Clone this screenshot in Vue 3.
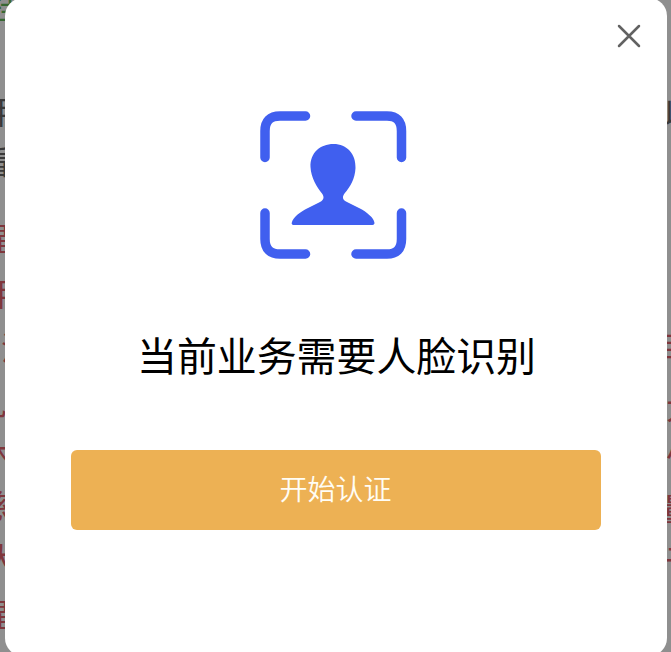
<template>
  <div class="auth-page">
    <!-- 遮罩下方的页面内容 -->
    <div class="page-content">
      <div class="page-col">
        <span
          v-for="(item, index) in leftTexts"
          :key="index"
          class="page-text"
          :class="item.color"
          :style="{ marginTop: `${item.gap}px`, textIndent: `${item.indent}px` }"
        >{{ item.text }}</span>
      </div>
      <div class="page-col">
        <span
          v-for="(item, index) in rightTexts"
          :key="index"
          class="page-text"
          :class="item.color"
          :style="{ marginTop: `${item.gap}px`, textIndent: `${item.indent}px` }"
        >{{ item.text }}</span>
      </div>
    </div>

    <div v-if="visible" class="auth-mask">
      <div class="auth-dialog">
        <div class="auth-header">
          <button class="auth-close" aria-label="关闭" @click="handleClose">
            <svg width="24" height="24" viewBox="0 0 24 24">
              <path d="M2 2 L22 22 M22 2 L2 22" />
            </svg>
          </button>
        </div>

        <svg class="auth-face" width="150" height="152" viewBox="0 0 150 152">
          <g class="face-frame">
            <path d="M7 48.500 V22 Q7 7 22 7 H47.500" />
            <path d="M98 7 H129 Q143.500 7 143.500 22 V48.500" />
            <path d="M7 104 V130 Q7 145 22 145 H47.500" />
            <path d="M98 145 H129 Q143.500 145 143.500 130 V104" />
          </g>
          <path
            class="face-person"
            d="M75.500 35 C89 35 98 45 97.500 59 C97 70 92 78 86.500 84.500
               C84 88 84.500 90.500 88 92.500 L101 99 C109 103 116 109 116.500 114
               C116.500 115.300 115.500 116 114.500 116 H35.500
               C34.300 116 33.500 115.200 33.700 114 C35 108 42 103 50 99
               L62 93 C66 91 66.500 88 64 84.500 C59 78 53 69 52.500 58
               C52 44 62 35 75.500 35 Z"
          />
        </svg>

        <div class="auth-title">当前业务需要人脸识别</div>
        <button class="auth-btn" @click="handleStart">开始认证</button>
      </div>
    </div>
  </div>
</template>

<script setup>
import { ref } from 'vue';

const emit = defineEmits(['start', 'close']);

const visible = ref(true);

const leftTexts = [
  { text: '挂', color: 'green', gap: -11, indent: -11 },
  { text: '用', color: 'dark', gap: 73, indent: -15 },
  { text: '看', color: 'dark', gap: 18, indent: -21 },
  { text: '醒', color: 'red', gap: 45, indent: -23 },
  { text: '用', color: 'red', gap: 23, indent: -15 },
  { text: '注', color: 'red', gap: 22, indent: 1 },
  { text: '九', color: 'red', gap: 23, indent: -26 },
  { text: '木', color: 'red', gap: 19, indent: -18 },
  { text: '慈', color: 'red', gap: 20, indent: -22 },
  { text: '大', color: 'red', gap: 21, indent: -15 },
  { text: '醒', color: 'red', gap: 24, indent: -23 }
];

const rightTexts = [
  { text: '以', color: 'dark', gap: 95, indent: -4 },
  { text: '自', color: 'red', gap: 200, indent: -8 },
  { text: '大', color: 'red', gap: 30, indent: -1 },
  { text: '小', color: 'red', gap: 12, indent: -1 },
  { text: '量', color: 'red', gap: 26, indent: -5 },
  { text: '于', color: 'red', gap: 20, indent: -2 }
];

const handleStart = () => {
  emit('start');
};

const handleClose = () => {
  visible.value = false;
  emit('close');
};
</script>

<style>
body {
  margin: 0;
  overflow: hidden;
}
</style>

<style scoped>
.auth-page {
  position: relative;
  height: 652px;
  overflow: hidden;
  background: #fff;
  font-family: "Noto Sans CJK SC", sans-serif;
}

.page-content {
  display: flex;
  justify-content: space-between;
  height: 652px;
}

.page-col {
  display: flex;
  flex-direction: column;
  flex: none;
  width: 5px;
}

.page-col:last-child {
  width: 4px;
}

.page-text {
  flex: none;
  height: 32px;
  line-height: 32px;
  font-size: 32px;
  white-space: nowrap;
}

.green {
  color: #62b95c;
}

.dark {
  color: #666;
}

.red {
  color: #e2606c;
}

/* 半透明遮罩 */
.auth-mask {
  position: absolute;
  top: 0;
  right: 0;
  bottom: 0;
  left: 0;
  display: flex;
  justify-content: center;
  background: rgba(0, 0, 0, 0.44);
}

.auth-dialog {
  box-sizing: border-box;
  display: flex;
  flex: none;
  flex-direction: column;
  align-items: center;
  width: 662px;
  height: 658px;
  margin-top: -2px;
  border-radius: 18px;
  background: #fff;
}

.auth-header {
  display: flex;
  justify-content: flex-end;
  box-sizing: border-box;
  width: 100%;
  height: 111px;
  padding: 26px 25.5px 0 0;
}

.auth-close {
  width: 24px;
  height: 24px;
  padding: 0;
  border: none;
  background: none;
  cursor: pointer;
}

.auth-close svg {
  display: block;
  fill: none;
  stroke: #626262;
  stroke-width: 2.5;
  stroke-linecap: round;
}

.auth-face {
  flex: none;
  margin-right: 6px;
}

.face-frame {
  fill: none;
  stroke: #405fef;
  stroke-width: 9.5;
  stroke-linecap: round;
}

.face-person {
  fill: #405fef;
}

.auth-title {
  margin-top: 63px;
  padding-left: 2px;
  line-height: 60px;
  font-size: 39.9px;
  color: #000;
  white-space: nowrap;
}

.auth-btn {
  width: 530px;
  height: 80px;
  margin-top: 66px;
  padding: 0 0 4px;
  border: none;
  border-radius: 6px;
  background: #edb154;
  color: #fffdf5;
  font-family: inherit;
  font-size: 28px;
  font-weight: 350;
  cursor: pointer;
}
</style>
